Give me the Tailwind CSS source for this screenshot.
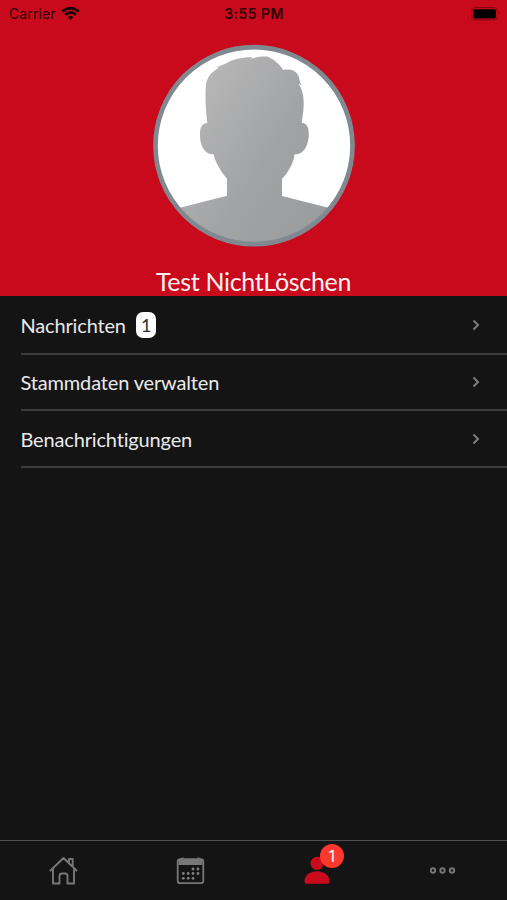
<!DOCTYPE html>
<html lang="de">
<head>
<meta charset="utf-8">
<title>Profil</title>
<script src="https://cdn.jsdelivr.net/npm/@tailwindcss/browser@4"></script>
</head>
<body class="bg-[#141414]">
<div class="flex h-[900px] w-[507px] flex-col overflow-hidden bg-[#141414] font-['Lato',sans-serif] [font-variant-ligatures:none]">
  <header class="flex h-[296px] shrink-0 flex-col items-center bg-[#c90a1c]">
    <div class="grid h-[28px] w-full shrink-0 grid-cols-3 items-center pr-[6px] pl-[9px] font-['Inter',sans-serif] text-[#2c0207]">
      <div class="flex items-center gap-[5px]">
        <span class="text-[14px] leading-none tracking-[0.1px]">Carrier</span>
        <svg class="h-[15px] w-[19px] -translate-y-[1px]" viewBox="0 0 19 15" fill="none" stroke="#180003" stroke-width="2.7"><path d="M1.2 5.6Q9.500-1.500 17.800 5.600M4.200 8.700Q9.500 4.300 14.800 8.700"/><path d="M6.600 11Q9.500 8.800 12.400 11L9.500 14.100Z" fill="#180003" stroke="none"/></svg>
      </div>
      <span class="-translate-x-[1px] text-center text-[14px] leading-none font-semibold tracking-[0.450px]">3:55 PM</span>
      <svg class="h-[14px] w-[31px] translate-x-[0.500px] justify-self-end" viewBox="0 0 31 14"><rect x="1" y="0.500" width="26" height="12.500" rx="3.500" fill="none" stroke="#870512"/><rect x="2.500" y="2.200" width="23" height="9.200" rx="2" fill="#000"/><path d="M28.500 4.500Q30.500 6.700 28.500 9Z" fill="#870512"/></svg>
    </div>
    <svg class="mt-[7px] h-[220px] w-[220px] shrink-0 translate-x-[1px]" viewBox="0 0 660 660">
      <defs>
        <linearGradient id="skin" x1="0" y1="0" x2="1" y2="0.800"><stop offset="0.100" stop-color="#b9b9b9"/><stop offset="0.600" stop-color="#a2a3a5"/><stop offset="1" stop-color="#999b9d"/></linearGradient>
        <clipPath id="round"><circle cx="327" cy="332" r="296"/></clipPath>
      </defs>
      <circle cx="327" cy="332" r="296" fill="#fff"/>
      <g clip-path="url(#round)"><path fill="url(#skin)" d="M90 522L246 482V432C226 408 209 378 206 358C180 360 166 334 165 304C164 278 170 264 187 264C182 224 179 178 184 142C190 120 204 108 222 98L214 97C228 90 238 89 245 84C264 73 292 66 324 67L316 73C334 65 352 64 370 65C389 76 406 88 414 105C434 101 451 106 459 119C464 128 462 139 470 151L460 147C478 169 477 202 475 228L470 263C487 264 493 280 491 307C488 336 474 360 449 358C444 388 430 412 411 432V483L565 522V660H90Z"/></g>
      <circle cx="327" cy="332" r="295.500" fill="none" stroke="#818990" stroke-width="14"/>
    </svg>
    <h1 class="mt-[11px] text-[25px] leading-[30px] tracking-[-0.320px] whitespace-nowrap text-[#fff0f1]">Test NichtLöschen</h1>
  </header>
  <main class="grow">
    <ul class="pl-[20.500px] text-[20px] leading-[24px] tracking-[-0.160px] text-[#e9e9e9]">
      <li class="flex h-[58.500px] items-center justify-between border-b-2 border-[#3b3b3b] pt-[1px] pr-[27.500px]">
        <span class="flex items-center gap-[10px]"><span class="-translate-y-[0.500px]">Nachrichten</span> <span class="flex h-[26px] w-[20.500px] items-center justify-center rounded-[7px] bg-white text-[18px] text-[#303030]">1</span></span>
        <svg class="h-[12px] w-[8px]" viewBox="0 0 8 12" fill="none" stroke="#7d7d7d" stroke-width="2"><path d="M1.500 1.500L6 6L1.500 10.500"/></svg>
      </li>
      <li class="flex h-[56.700px] items-center justify-between border-b-2 border-[#3b3b3b] pt-[1px] pr-[27.500px]">
        <span>Stammdaten verwalten</span>
        <svg class="h-[12px] w-[8px]" viewBox="0 0 8 12" fill="none" stroke="#7d7d7d" stroke-width="2"><path d="M1.500 1.500L6 6L1.500 10.500"/></svg>
      </li>
      <li class="flex h-[56.500px] items-center justify-between border-b-2 border-[#3b3b3b] pt-[1px] pr-[27.500px]">
        <span>Benachrichtigungen</span>
        <svg class="h-[12px] w-[8px]" viewBox="0 0 8 12" fill="none" stroke="#7d7d7d" stroke-width="2"><path d="M1.500 1.500L6 6L1.500 10.500"/></svg>
      </li>
    </ul>
  </main>
  <nav class="grid h-[60px] shrink-0 grid-cols-4 border-t border-[#505050] pt-[14.500px]">
    <div class="flex justify-center"><svg class="h-[29px] w-[30px] translate-x-[0.500px]" viewBox="0 0 30 29" fill="none" stroke="#777" stroke-width="1.900" stroke-linejoin="round" stroke-linecap="round"><path d="M2 14.500L15 2L28 14.500M4.500 13V27.500H11V20Q11 17.500 13.500 17.500H16.500Q19 17.500 19 20V27.500H25.500V13M20.500 6.500V3H24.200V10"/></svg></div>
    <div class="flex justify-center"><svg class="h-[29px] w-[30px] translate-x-[0.500px]" viewBox="0 0 30 29"><rect x="2.200" y="3.200" width="25.600" height="24" rx="2.500" fill="none" stroke="#777" stroke-width="1.800"/><path d="M3 4H27V9H3ZM6 1.500H8V4H6ZM22 1.500H24V4H22Z" fill="#777"/><g fill="#808080"><circle cx="17.500" cy="13" r="1.400"/><circle cx="22.500" cy="13" r="1.400"/><circle cx="7.800" cy="17.500" r="1.400"/><circle cx="12.700" cy="17.500" r="1.400"/><circle cx="17.500" cy="17.500" r="1.400"/><circle cx="22.500" cy="17.500" r="1.400"/><circle cx="7.800" cy="22.300" r="1.400"/><circle cx="12.700" cy="22.300" r="1.400"/><circle cx="17.500" cy="22.300" r="1.400"/></g></svg></div>
    <div class="flex justify-center"><div class="relative h-[29px] w-[26px]">
      <svg class="h-[29px] w-[26px]" viewBox="0 0 26 29" fill="#c90a1c"><circle cx="13" cy="7.300" r="6.500"/><path d="M0.500 25.500C0.500 11.800 25.500 11.800 25.500 25.500Q25.500 27.800 23.500 27.800H2.500Q0.500 27.800 0.500 25.500Z"/></svg>
      <span class="absolute -top-[12px] left-[16px] flex h-[24px] w-[24px] items-center justify-center rounded-full bg-[#ff382e] font-['Inter',sans-serif] text-[16px] leading-none text-white">1</span>
    </div></div>
    <div class="flex justify-center"><svg class="h-[29px] w-[30px] -translate-x-[1px]" viewBox="0 0 30 29" fill="none" stroke="#777" stroke-width="1.900"><circle cx="5" cy="14.500" r="2.200"/><circle cx="14.500" cy="14.500" r="2.200"/><circle cx="24" cy="14.500" r="2.200"/></svg></div>
  </nav>
</div>
</body>
</html>
